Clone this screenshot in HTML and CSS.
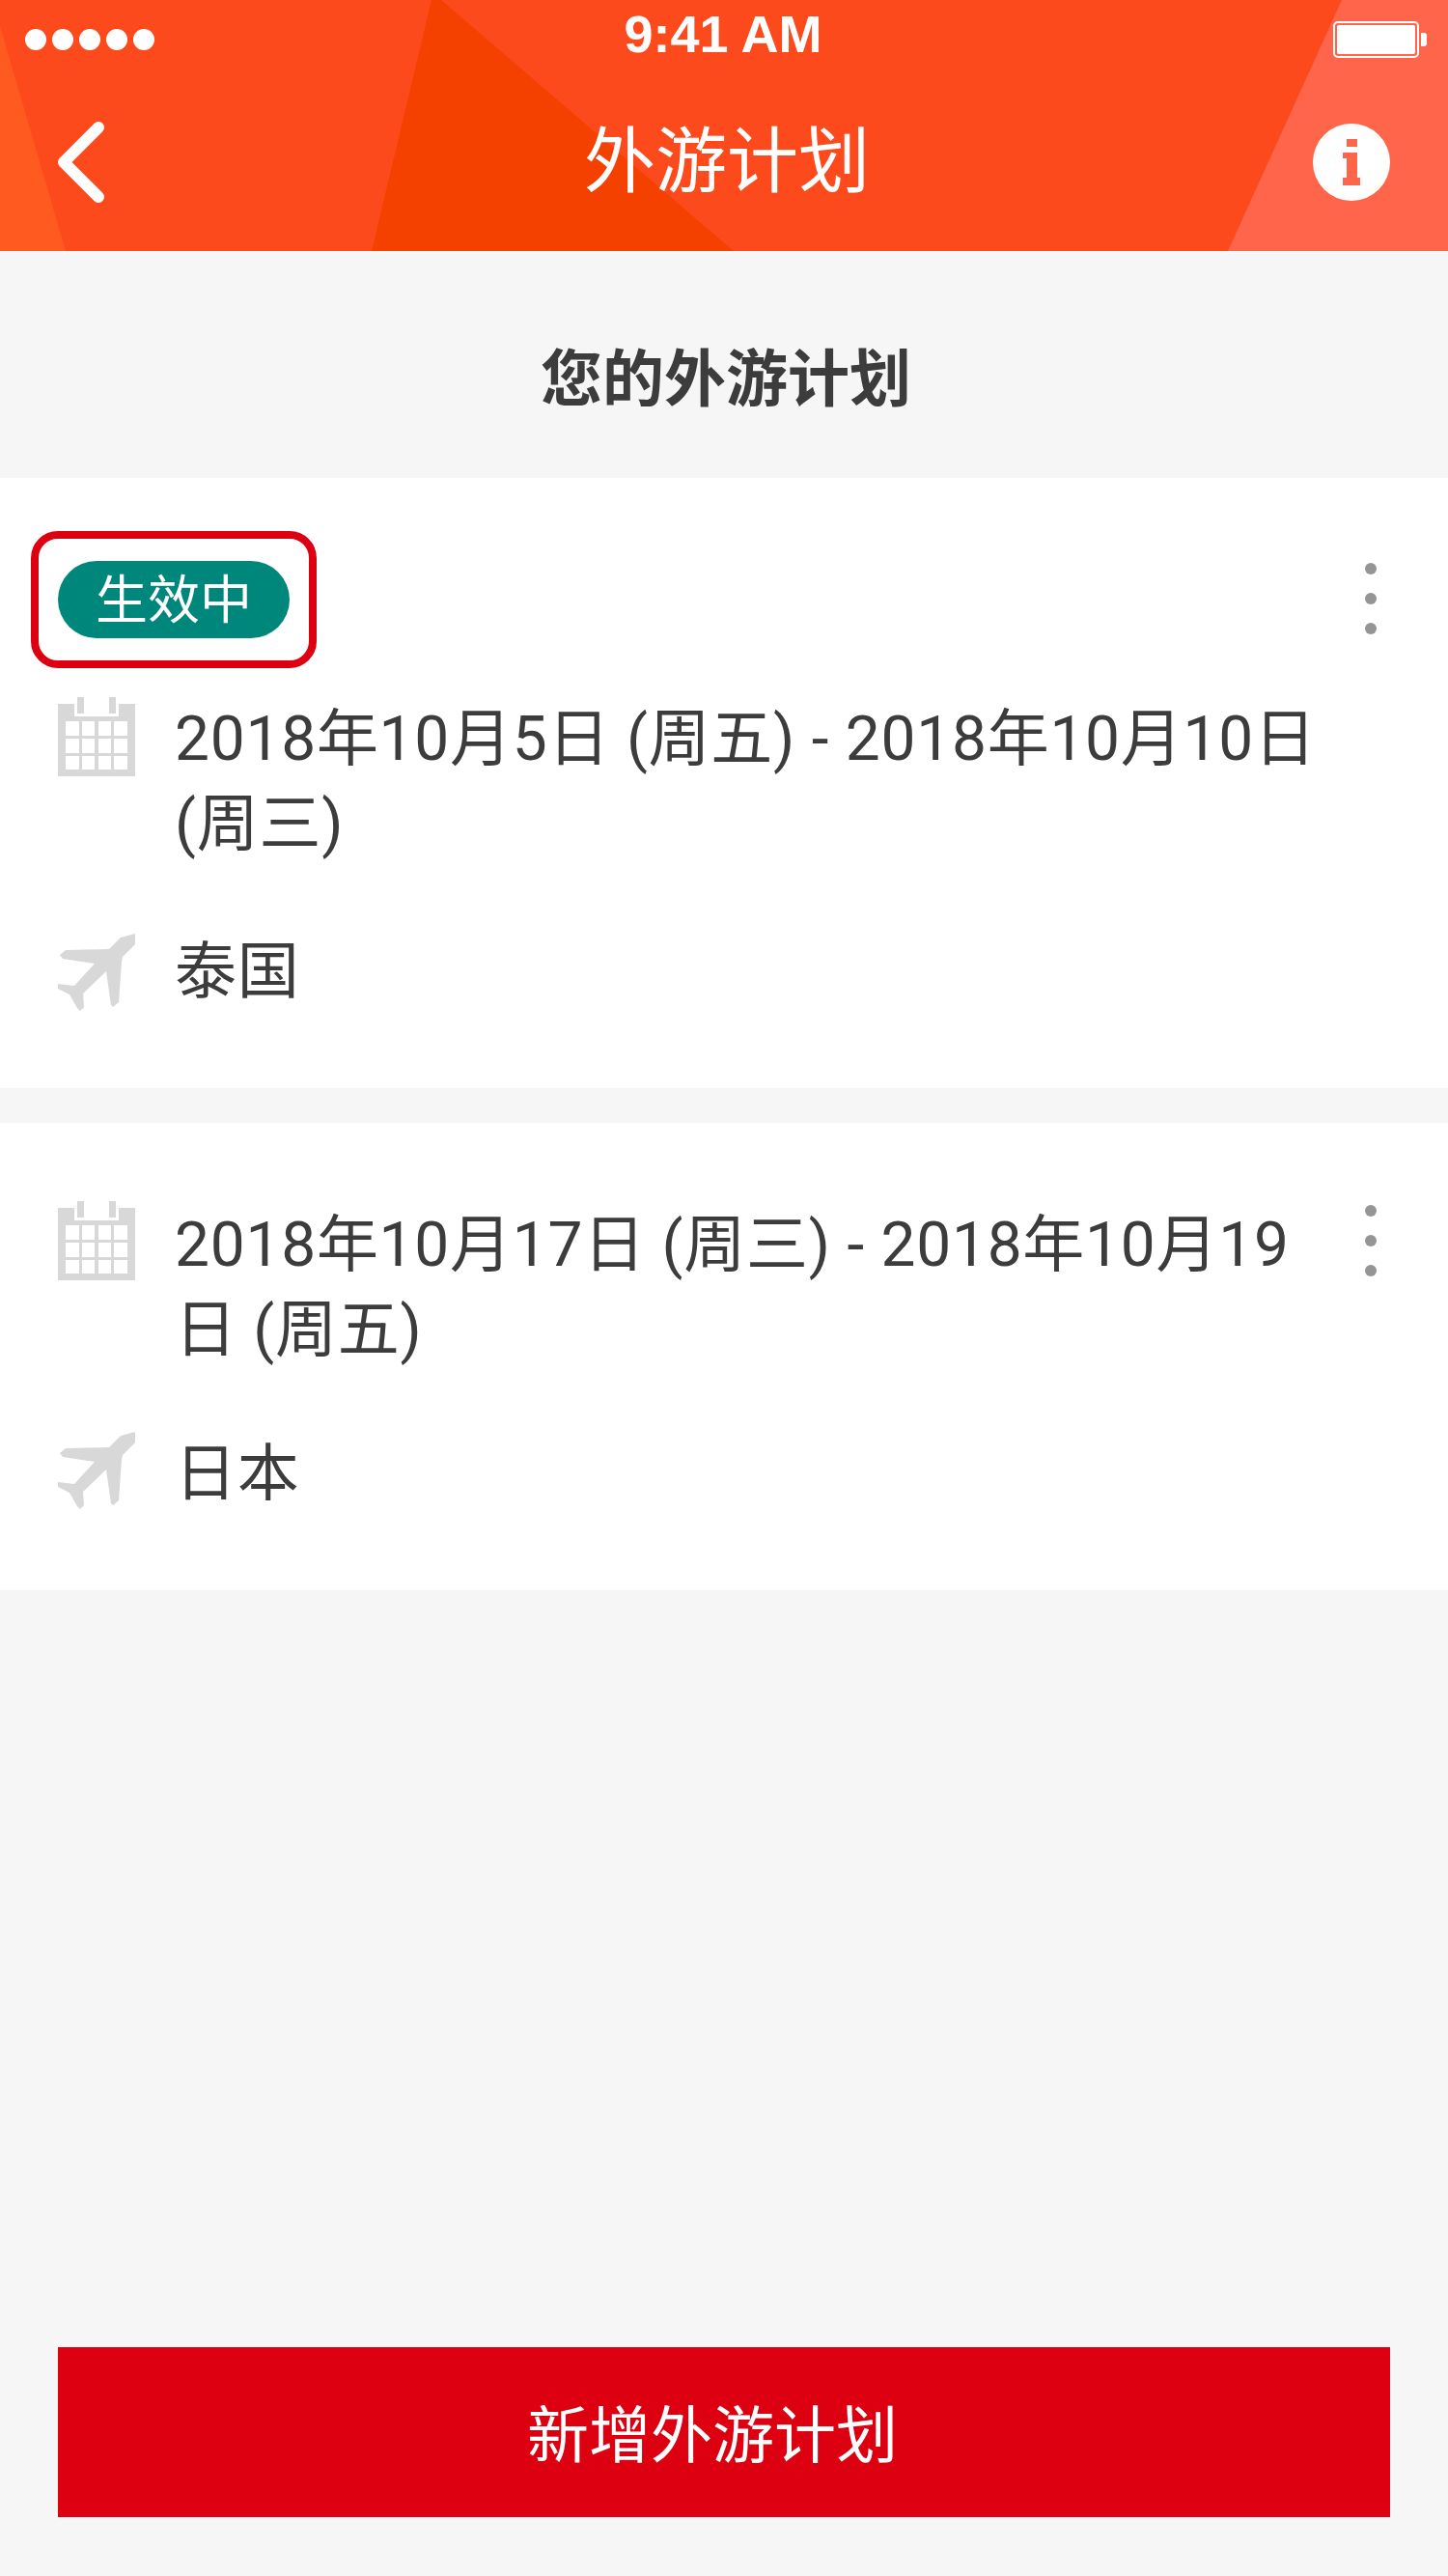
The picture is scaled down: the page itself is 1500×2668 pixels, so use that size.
FILE: index.html
```html
<!DOCTYPE html>
<html>
	<head>
		<meta charset="utf-8">
		<title>外游计划</title>
		<link rel="stylesheet" href="styles.css">
	</head>
	<body>
		<div class="page">
			<header class="top">
				<svg class="top-bg" width="1500" height="260" viewBox="0 0 1500 260">
					<rect width="1500" height="260" fill="#fc4a1c"/>
					<polygon points="0,27 68,260 0,260" fill="#ff5a20"/>
					<polygon points="447,0 457,0 760,260 385,260" fill="#f54100"/>
					<polygon points="1390,0 1500,0 1500,260 1272,260" fill="#ff654a"/>
				</svg>
				<div class="status">
					<div class="signal"><i></i><i></i><i></i><i></i><i></i></div>
					<div class="time">9:41 AM</div>
					<div class="battery"><span class="battery-body"><span class="battery-fill"></span></span><span class="battery-nub"></span></div>
				</div>
				<div class="nav">
					<svg class="back" width="60" height="96" viewBox="0 0 60 96"><path d="M52 12 L16 48 L52 84" fill="none" stroke="#fff" stroke-width="12" stroke-linecap="round" stroke-linejoin="round"/></svg>
					<h1 class="nav-title">外游计划</h1>
					<svg class="info" width="80" height="80" viewBox="0 0 80 80">
						<circle cx="40" cy="40" r="40" fill="#fff"/>
						<path d="M35 16h11v8h-11z M31 30h15v26h3v8h-18v-8h4v-20h-4z" fill="#ff654a"/>
					</svg>
				</div>
			</header>
			<h2 class="heading">您的外游计划</h2>
			<section class="card card-first">
				<div class="tag-box"><span class="tag">生效中</span></div>
				<div class="more"><i></i><i></i><i></i></div>
				<div class="row row-date">
					<svg class="ico" width="80" height="82" viewBox="0 0 80 82">
						<path d="M0 7h20v-7h7v7h26v-7h7v7h20v75h-80z" fill="#d8d8d8"/>
						<path d="M17 7h3v10h7v-10h26v10h7v-10h3v13h-46z" fill="#fff"/>
						<path d="M8 25h14v15h-14zM25 25h13v15h-13zM42 25h13v15h-13zM58 25h14v15h-14zM8 43h14v15h-14zM25 43h13v15h-13zM42 43h13v15h-13zM58 43h14v15h-14zM8 61h14v14h-14zM25 61h13v14h-13zM42 61h13v14h-13zM58 61h14v14h-14z" fill="#fff"/>
					</svg>
					<p class="txt">2018年10月5日 (周五) - 2018年10月10日 (周三)</p>
				</div>
				<div class="row row-place">
					<svg class="ico" width="80" height="80" viewBox="0 0 80 80"><path d="M80 0V11L67 24 66 29 63 71 57 76 55 74 50 39 26 62 27 76 23 80 20 77 12 63 0 57V52L17 54 38 31 5 26 2 22 8 17 53 16 65 4Z" fill="#d8d8d8"/></svg>
					<p class="txt">泰国</p>
				</div>
			</section>
			<section class="card card-second">
				<div class="more"><i></i><i></i><i></i></div>
				<div class="row row-date">
					<svg class="ico" width="80" height="82" viewBox="0 0 80 82">
						<path d="M0 7h20v-7h7v7h26v-7h7v7h20v75h-80z" fill="#d8d8d8"/>
						<path d="M17 7h3v10h7v-10h26v10h7v-10h3v13h-46z" fill="#fff"/>
						<path d="M8 25h14v15h-14zM25 25h13v15h-13zM42 25h13v15h-13zM58 25h14v15h-14zM8 43h14v15h-14zM25 43h13v15h-13zM42 43h13v15h-13zM58 43h14v15h-14zM8 61h14v14h-14zM25 61h13v14h-13zM42 61h13v14h-13zM58 61h14v14h-14z" fill="#fff"/>
					</svg>
					<p class="txt">2018年10月17日 (周三) - 2018年10月19日 (周五)</p>
				</div>
				<div class="row row-place">
					<svg class="ico" width="80" height="80" viewBox="0 0 80 80"><path d="M80 0V11L67 24 66 29 63 71 57 76 55 74 50 39 26 62 27 76 23 80 20 77 12 63 0 57V52L17 54 38 31 5 26 2 22 8 17 53 16 65 4Z" fill="#d8d8d8"/></svg>
					<p class="txt">日本</p>
				</div>
			</section>
			<div class="foot">
				<div class="add">新增外游计划</div>
			</div>
		</div>
	</body>
</html>
```

FILE: styles.css
```css
*{margin:0;padding:0;box-sizing:border-box;}
body{background:#f6f6f6;font-family:Roboto,"Noto Sans CJK SC",sans-serif;color:#3c3c3c;}
.page{width:1500px;height:2668px;display:flex;flex-direction:column;overflow:hidden;}

.top{position:relative;height:260px;color:#fff;}
.top-bg{position:absolute;left:0;top:0;}
.status{position:relative;height:70px;display:grid;grid-template-columns:1fr auto 1fr;align-items:start;padding:0 22px 0 26px;}
.signal{display:flex;gap:6px;margin-top:30px;}
.signal i{width:22px;height:22px;border-radius:50%;background:#fff;}
.time{font:bold 54px/1 "Liberation Sans",sans-serif;white-space:nowrap;margin:8px 6px 0 0;}
.battery{display:flex;align-items:center;gap:2px;justify-self:end;margin-top:22px;}
.battery-body{width:89px;height:38px;border:2px solid #fff;border-radius:5px;padding:2px;display:block;}
.battery-fill{display:block;height:100%;background:#fff;border-radius:2px;}
.battery-nub{width:6px;height:14px;background:#fff;border-radius:0 3px 3px 0;}
.nav{position:relative;display:grid;grid-template-columns:1fr auto 1fr;align-items:center;padding:6px 60px 0 50px;height:190px;}
.nav-title{font-size:74px;font-weight:400;line-height:1;padding-left:16px;}
.info{justify-self:end;}
.heading{height:235px;display:flex;align-items:center;justify-content:center;font-size:64px;font-weight:700;padding:19px 0 0 4px;}

.card{position:relative;background:#fff;}
.card-first{height:632px;padding-top:55px;}
.card-second{height:484px;margin-top:36px;padding-top:81px;}
.tag-box{width:296px;height:142px;margin-left:32px;border:8px solid #dc0011;border-radius:28px;display:flex;align-items:center;justify-content:center;}
.tag{width:240px;height:80px;border-radius:40px;background:#00877c;color:#fff;font-size:54px;line-height:84px;text-align:center;}
.more{position:absolute;right:74px;display:flex;flex-direction:column;gap:19px;}
.card-first .more{top:88px;}
.card-second .more{top:85px;}
.more i{width:12px;height:12px;border-radius:50%;background:#959595;}
.row{display:flex;gap:41px;padding:0 120px 0 60px;}
.row-place{align-items:center;}
.ico{flex:none;}
.txt{font-size:64px;letter-spacing:.75px;line-height:88px;}
.card-first .row-date{margin-top:30px;}
.card-first .row-place{margin-top:65px;}
.card-second .row-date .txt{margin-top:2px;}
.card-second .row-place{margin-top:61px;align-items:flex-start;}
.foot{margin-top:auto;padding:0 60px 61px;}
.add{height:176px;background:#dc0011;color:#fff;font-size:64px;line-height:186px;text-align:center;padding-right:24px;}
```
